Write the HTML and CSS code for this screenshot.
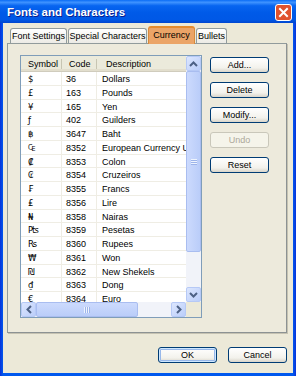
FILE: index.html
```html
<!DOCTYPE html>
<html lang="en">
<head>
    <meta charset="UTF-8">
    <title>Fonts and Characters</title>
    <link rel="stylesheet" href="styles.css">
</head>
<body>
    <div class="window">
        <div class="titlebar">
            <span class="title">Fonts and Characters</span>
            <span class="close-btn">
                <svg width="17" height="17" viewBox="0 0 17 17">
                    <rect x="0.5" y="0.5" width="16" height="16" rx="2.5" fill="#E0522E" stroke="#FFFFFF"/>
                    <path d="M5 5 L12 12 M12 5 L5 12" stroke="#FFFFFF" stroke-width="2" stroke-linecap="square"/>
                </svg>
            </span>
        </div>
        <div class="client">
            <div class="tabs">
                <div class="tab tab-font">Font Settings</div>
                <div class="tab tab-special">Special Characters</div>
                <div class="tab tab-currency selected">Currency</div>
                <div class="tab tab-bullets">Bullets</div>
            </div>
            <div class="panel">
                <div class="listview">
                    <div class="list-body">
                        <div class="list-header">
                            <div class="hcell">Symbol</div>
                            <div class="hcell">Code</div>
                            <div class="hcell">Description</div>
                        </div>
                        <div class="row"><span class="sym">$</span><span class="code">36</span><span class="desc">Dollars</span></div>
                        <div class="row"><span class="sym">£</span><span class="code">163</span><span class="desc">Pounds</span></div>
                        <div class="row"><span class="sym">¥</span><span class="code">165</span><span class="desc">Yen</span></div>
                        <div class="row"><span class="sym">ƒ</span><span class="code">402</span><span class="desc">Guilders</span></div>
                        <div class="row"><span class="sym">฿</span><span class="code">3647</span><span class="desc">Baht</span></div>
                        <div class="row"><span class="sym">₠</span><span class="code">8352</span><span class="desc">European Currency Unit</span></div>
                        <div class="row"><span class="sym">₡</span><span class="code">8353</span><span class="desc">Colon</span></div>
                        <div class="row"><span class="sym">₢</span><span class="code">8354</span><span class="desc">Cruzeiros</span></div>
                        <div class="row"><span class="sym">₣</span><span class="code">8355</span><span class="desc">Francs</span></div>
                        <div class="row"><span class="sym">₤</span><span class="code">8356</span><span class="desc">Lire</span></div>
                        <div class="row"><span class="sym">₦</span><span class="code">8358</span><span class="desc">Nairas</span></div>
                        <div class="row"><span class="sym">₧</span><span class="code">8359</span><span class="desc">Pesetas</span></div>
                        <div class="row"><span class="sym">₨</span><span class="code">8360</span><span class="desc">Rupees</span></div>
                        <div class="row"><span class="sym">₩</span><span class="code">8361</span><span class="desc">Won</span></div>
                        <div class="row"><span class="sym">₪</span><span class="code">8362</span><span class="desc">New Shekels</span></div>
                        <div class="row"><span class="sym">₫</span><span class="code">8363</span><span class="desc">Dong</span></div>
                        <div class="row"><span class="sym">€</span><span class="code">8364</span><span class="desc">Euro</span></div>
                    </div>
                    <div class="vscroll">
                        <div class="sbtn">
                            <svg width="9" height="6" viewBox="0 0 9 6"><path d="M1 5 L4.5 1.5 L8 5" fill="none" stroke="#4D6185" stroke-width="2"/></svg>
                        </div>
                        <div class="vtrack"><div class="vthumb"><span class="grip-v"></span></div></div>
                        <div class="sbtn">
                            <svg width="9" height="6" viewBox="0 0 9 6"><path d="M1 1 L4.5 4.5 L8 1" fill="none" stroke="#4D6185" stroke-width="2"/></svg>
                        </div>
                    </div>
                    <div class="hscroll">
                        <div class="sbtn">
                            <svg width="6" height="9" viewBox="0 0 6 9"><path d="M5 1 L1.5 4.5 L5 8" fill="none" stroke="#4D6185" stroke-width="2"/></svg>
                        </div>
                        <div class="htrack"><div class="hthumb"><span class="grip-h"></span></div></div>
                        <div class="sbtn">
                            <svg width="6" height="9" viewBox="0 0 6 9"><path d="M1 1 L4.5 4.5 L1 8" fill="none" stroke="#4D6185" stroke-width="2"/></svg>
                        </div>
                    </div>
                    <div class="corner"></div>
                </div>
                <div class="side-buttons">
                    <button class="btn">Add...</button>
                    <button class="btn">Delete</button>
                    <button class="btn">Modify...</button>
                    <button class="btn" disabled>Undo</button>
                    <button class="btn">Reset</button>
                </div>
            </div>
            <div class="footer">
                <button class="btn default">OK</button>
                <button class="btn">Cancel</button>
            </div>
        </div>
    </div>
</body>
</html>
```

FILE: styles.css
```css
body {
    margin: 0;
    padding: 0;
    font-family: "Liberation Sans", "DejaVu Sans", sans-serif;
    font-size: 9px;
    color: #000;
}
.window {
    width: 296px;
    height: 376px;
    display: flex;
    flex-direction: column;
    background: linear-gradient(90deg, #0831D9, #0058EE 3px, #0058EE 293px, #0831D9);
}
.titlebar {
    height: 23px;
    display: flex;
    align-items: center;
    justify-content: space-between;
    padding: 0 4px 0 7px;
    background: linear-gradient(#0A6CF5 0%, #3F93FF 10%, #0765F0 25%, #005AE8 55%, #0058E6 85%, #0046CF 100%);
}
.title {
    color: #fff;
    font-weight: bold;
    font-size: 11.5px;
    text-shadow: 1px 1px 0 #0A1E8C;
}
.close-btn {
    display: flex;
    margin-top: 2px;
}
.client {
    flex: 1;
    margin: 0 3px 3px;
    padding: 3px 6px 10px 4px;
    background-color: #ECE9D8;
    display: flex;
    flex-direction: column;
}

/* tab strip */
.tabs {
    height: 17px;
    display: flex;
    align-items: flex-end;
    padding-left: 3px;
    gap: 1px;
    position: relative;
    z-index: 1;
}
.tab {
    height: 15px;
    box-sizing: border-box;
    border: 1px solid #919B9C;
    border-bottom: none;
    border-radius: 3px 3px 0 0;
    background: linear-gradient(#FFFFFF, #F4F3EE 60%, #ECEBE6);
    text-align: center;
    line-height: 14px;
    white-space: nowrap;
}
.tab-font { width: 57px; }
.tab-special { width: 79px; }
.tab-currency { width: 47px; }
.tab-bullets { width: 31px; }
.tab.selected {
    height: 18px;
    margin-bottom: -1px;
    border-color: #D88A3C;
    border-top: 2px solid #E68B2C;
    background: #EBA467;
    line-height: 15px;
}

.panel {
    height: 290px;
    box-sizing: border-box;
    border: 1px solid #919B9C;
    border-right-color: #8C9293;
    border-bottom-color: #8C9293;
    box-shadow: 1px 1px 0 #C5C2B2;
    background-color: #EDEADC;
    padding: 11px 0 0 12px;
    display: flex;
}

/* list view */
.listview {
    width: 182px;
    height: 263px;
    box-sizing: border-box;
    border: 1px solid #7F9DB9;
    display: grid;
    grid-template-columns: 165px 15px;
    grid-template-rows: 246px 15px;
    background: #fff;
}
.list-body {
    overflow: hidden;
}
.list-header {
    display: grid;
    grid-template-columns: 41px 35px 120px;
    height: 16px;
    box-sizing: border-box;
    background: #EBEADB;
    border-bottom: 1px solid #D0CCBD;
    box-shadow: inset 0 -2px 0 #E2DECD;
}
.hcell {
    padding-left: 7px;
    padding-top: 1px;
    color: #000;
    border-right: 1px solid #C7C5B2;
    margin: 3px 0 3px;
    line-height: 9px;
}
.hcell:last-child {
    border-right: none;
    padding-left: 9px;
}
.row {
    display: grid;
    grid-template-columns: 41px 35px 120px;
    height: 13.75px;
    line-height: 14px;
}
.row span {
    border-right: 1px solid #EFEDE4;
    border-bottom: 1px solid #EFEDE4;
    white-space: nowrap;
    overflow: hidden;
}
.sym { padding-left: 7px; font-family: "DejaVu Sans", sans-serif; font-size: 8.5px; }
.code { padding-left: 4px; }
.desc { padding-left: 5px; }

/* scrollbars */
.vscroll {
    display: flex;
    flex-direction: column;
    background: #F1F3F9;
}
.vtrack {
    flex: 1;
}
.vthumb {
    height: 181px;
    box-sizing: border-box;
    border: 1px solid #A9BDF0;
    border-radius: 2px;
    background: linear-gradient(90deg, #CCDAFD, #BACDF9);
    display: flex;
    align-items: center;
    justify-content: center;
}
.grip-v {
    width: 6px;
    height: 6px;
    background: repeating-linear-gradient(#EEF4FE 0 1px, #9DB4EA 1px 2px);
}
.hscroll {
    display: flex;
    background: #F1F3F9;
}
.htrack {
    flex: 1;
}
.hthumb {
    width: 102px;
    height: 100%;
    box-sizing: border-box;
    border: 1px solid #A9BDF0;
    border-radius: 2px;
    background: linear-gradient(#CCDAFD, #BACDF9);
    display: flex;
    align-items: center;
    justify-content: center;
}
.grip-h {
    width: 6px;
    height: 6px;
    background: repeating-linear-gradient(90deg, #EEF4FE 0 1px, #9DB4EA 1px 2px);
}
.sbtn {
    width: 15px;
    height: 15px;
    box-sizing: border-box;
    border: 1px solid #B6C9F6;
    border-radius: 2px;
    background: linear-gradient(135deg, #DCE6FE, #BBCEFA);
    display: flex;
    align-items: center;
    justify-content: center;
}
.corner {
    background: #ECE9D8;
}

/* buttons */
.side-buttons {
    display: flex;
    flex-direction: column;
    gap: 9px;
    margin: 2px 0 0 8px;
}
.btn {
    width: 59px;
    height: 16px;
    box-sizing: border-box;
    padding: 0;
    border: 1px solid #003C74;
    border-radius: 3px;
    background: linear-gradient(#FFFFFF, #F3F2EC 70%, #D9D5CA);
    font-family: "Liberation Sans", sans-serif;
    font-size: 9px;
    color: #000;
}
.btn:disabled {
    border-color: #C9C7BA;
    background: #F5F4EA;
    color: #ACA899;
}
.btn.default {
    box-shadow: inset 0 0 0 1px #CEE7FF, inset 0 0 0 2px #98B8EA;
}
.footer {
    margin-top: 14px;
    display: flex;
    justify-content: flex-end;
    gap: 11px;
}
```
